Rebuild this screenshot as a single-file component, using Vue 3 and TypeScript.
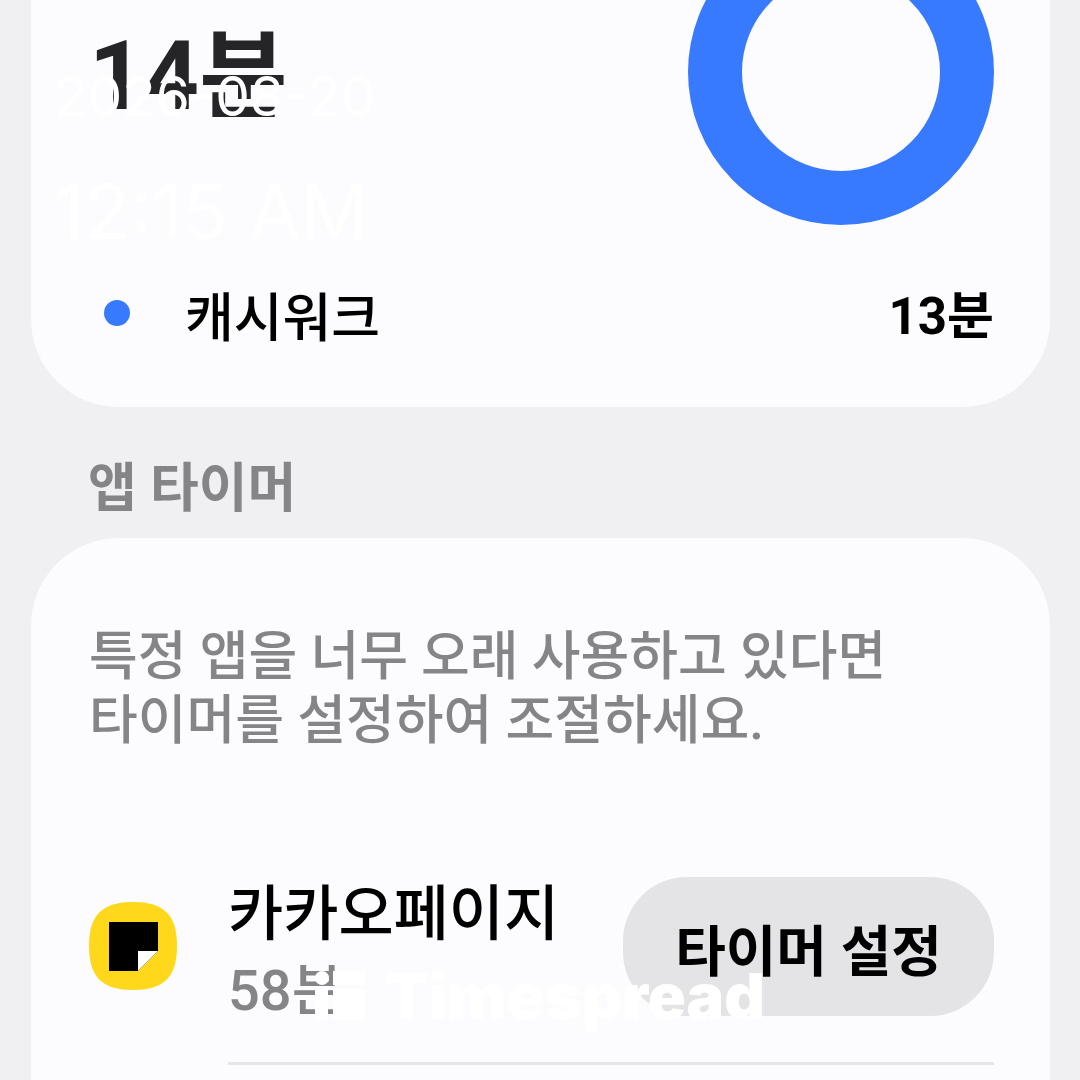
<script setup lang="ts">
interface Usage {
  name: string
  time: string
  color: string
}

interface TimedApp {
  id: string
  name: string
  time: string
}

const total = '14분'
const usages: Usage[] = [{ name: '캐시워크', time: '13분', color: '#387aff' }]
const apps: TimedApp[] = [{ id: 'kakaopage', name: '카카오페이지', time: '58분' }]
</script>

<template>
  <main class="screen">
    <section class="card summary">
      <div class="overview">
        <h1 class="total">{{ total }}</h1>
        <svg class="donut" viewBox="0 0 306 226" aria-hidden="true">
          <circle cx="153" cy="72" r="126" fill="none" stroke="#387aff" stroke-width="54" />
        </svg>
      </div>
      <ul class="legend">
        <li v-for="usage in usages" :key="usage.name" class="legend-row">
          <span class="dot" :style="{ background: usage.color }"></span>
          <span class="legend-name">{{ usage.name }}</span>
          <span class="legend-time">{{ usage.time }}</span>
        </li>
      </ul>
    </section>

    <h2 class="heading">앱 타이머</h2>

    <section class="card timers">
      <p class="description">
        특정 앱을 너무 오래 사용하고 있다면<br />타이머를 설정하여 조절하세요.
      </p>
      <ul class="apps">
        <li v-for="app in apps" :key="app.id" class="app">
          <svg class="app-icon" viewBox="0 0 88 88" aria-hidden="true">
            <path
              d="M44 0C75 0 88 13 88 44S75 88 44 88 0 75 0 44 13 0 44 0Z"
              fill="#ffd81c"
            />
            <path d="M20 20H69V49L49 69H20Z" fill="#000" />
            <path d="M49 49H69L49 69Z" fill="#fff" />
          </svg>
          <div class="app-body">
            <div class="app-text">
              <span class="app-name">{{ app.name }}</span>
              <span class="app-time">{{ app.time }}</span>
            </div>
            <button type="button" class="set-timer">타이머 설정</button>
          </div>
        </li>
      </ul>
    </section>

    <div class="stamp">
      <time class="stamp-date">2026-08-20</time>
      <time class="stamp-time">12:15 AM</time>
    </div>

    <div class="brand">
      <svg class="brand-mark" viewBox="0 0 50 50" aria-hidden="true">
        <circle cx="7" cy="7" r="7" fill="#fff" />
        <path d="M18 0H50V14H18ZM0 18H13V49H0ZM18 18H50V49H18Z" fill="#fff" />
      </svg>
      <span class="brand-name">Timespread</span>
    </div>
  </main>
</template>

<style>
body {
  margin: 0;
  background: #f0f0f2;
}
</style>

<style scoped>
.screen {
  position: relative;
  display: flex;
  flex-direction: column;
  box-sizing: border-box;
  min-height: 100vh;
  padding: 0 30px 0 31px;
  overflow: hidden;
  background: #f0f0f2;
  color: #000;
  font-family: Roboto, 'Noto Sans CJK KR', sans-serif;
  font-weight: 500;
}

.card {
  padding: 0 56px 0 58px;
  background: #fcfcfe;
}

.summary {
  padding-bottom: 56px;
  border-radius: 0 0 88px 88px;
}

.overview {
  display: flex;
  justify-content: space-between;
  align-items: flex-start;
}

.total {
  margin: 24px 0 0;
  color: #252527;
  font-size: 96px;
  line-height: 104px;
  font-weight: 700;
}

.donut {
  width: 306px;
  height: 226px;
}

.legend,
.apps {
  margin: 0;
  padding: 0;
  list-style: none;
}

.legend {
  padding-top: 61px;
}

.legend-row {
  display: flex;
  align-items: flex-start;
  font-size: 53px;
  line-height: 64px;
}

.dot {
  width: 26px;
  height: 26px;
  margin: 13px 55px 0 15px;
  border-radius: 50%;
}

.legend-name {
  flex: 1;
}

.legend-time {
  font-size: 51px;
  line-height: 60px;
  font-weight: 700;
}

.heading {
  margin: 50px 57px 17px;
  color: #858587;
  font-size: 53px;
  line-height: 64px;
  font-weight: 700;
}

.timers {
  flex: 1;
  border-radius: 88px 88px 0 0;
}

.description {
  margin: 0;
  padding-top: 87px;
  color: #858587;
  font-size: 53px;
  line-height: 64px;
}

.apps {
  padding-top: 108px;
}

.app {
  display: flex;
  align-items: stretch;
}

.app-icon {
  flex: none;
  width: 88px;
  height: 88px;
  margin: 41px 51px 0 0;
}

.app-body {
  display: flex;
  flex: 1;
  justify-content: space-between;
  align-items: flex-start;
  padding: 16px 0 33px;
  border-bottom: 3px solid #e6e6e8;
}

.app-text {
  display: flex;
  flex-direction: column;
}

.app-name {
  font-size: 60px;
  line-height: 76px;
}

.app-time {
  color: #858587;
  font-size: 56px;
  line-height: 76px;
}

.set-timer {
  width: 371px;
  height: 139px;
  padding: 0;
  border: 0;
  border-radius: 64px;
  background: #e4e4e6;
  color: #000;
  font: inherit;
  font-size: 55px;
  font-weight: 700;
}

.stamp {
  position: absolute;
  top: 62px;
  left: 54px;
  display: flex;
  flex-direction: column;
  gap: 36px;
  color: #fff;
  font-family: Inter, sans-serif;
  font-weight: 400;
}

.stamp-date {
  font-size: 55px;
  line-height: 68px;
}

.stamp-time {
  font-size: 75px;
  line-height: 92px;
}

.brand {
  position: absolute;
  right: 0;
  bottom: 48px;
  left: 0;
  display: flex;
  justify-content: center;
  align-items: center;
  gap: 20px;
  color: #fff;
}

.brand-mark {
  width: 50px;
  height: 50px;
}

.brand-name {
  font-family: Inter, sans-serif;
  font-size: 63px;
  line-height: 72px;
  font-weight: 900;
}
</style>
